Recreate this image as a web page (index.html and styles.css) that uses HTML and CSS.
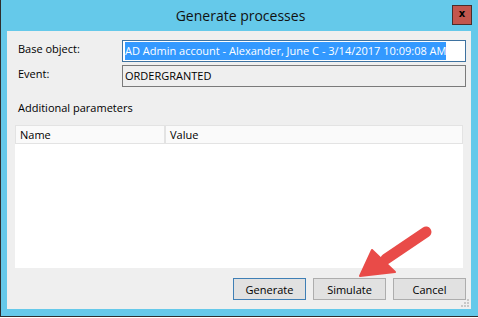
FILE: index.html
```html
<!DOCTYPE html>
<html lang="en">
<head>
    <meta charset="UTF-8">
    <title>Generate processes</title>
    <link rel="stylesheet" href="styles.css">
</head>
<body>
    <div class="window">
        <div class="titlebar">
            <span class="title">Generate processes</span>
            <span class="close">x</span>
        </div>

        <div class="panel">
            <!-- Object fields -->
            <div class="field">
                <label>Base object:</label>
                <div class="textbox focused"><span class="selected">AD Admin account - Alexander, June C - 3/14/2017 10:09:08 AM</span></div>
            </div>
            <div class="field">
                <label>Event:</label>
                <div class="textbox">ORDERGRANTED</div>
            </div>

            <p class="section">Additional parameters</p>

            <!-- Parameters grid -->
            <div class="grid">
                <div class="grid-head">
                    <div class="col col-name">Name</div>
                    <div class="col col-value">Value</div>
                </div>
                <div class="grid-body"></div>
            </div>

            <!-- Buttons -->
            <div class="buttons">
                <button class="default">Generate</button>
                <button>Simulate</button>
                <button>Cancel</button>
            </div>

            <svg class="grip" width="9" height="9" viewBox="0 0 9 9">
                <rect x="6" y="0" width="2" height="2" fill="#c8c8c8"/>
                <rect x="3" y="3" width="2" height="2" fill="#c8c8c8"/>
                <rect x="6" y="3" width="2" height="2" fill="#c8c8c8"/>
                <rect x="0" y="6" width="2" height="2" fill="#c8c8c8"/>
                <rect x="3" y="6" width="2" height="2" fill="#c8c8c8"/>
                <rect x="6" y="6" width="2" height="2" fill="#c8c8c8"/>
            </svg>
        </div>

        <!-- Callout arrow -->
        <svg class="arrow" width="478" height="318" viewBox="0 0 478 318">
            <g fill="#e94b48" stroke="#e94b48" stroke-linejoin="round">
                <line x1="426" y1="232" x2="386" y2="259" stroke-width="11" stroke-linecap="round"/>
                <polygon points="360,276 372,250 395,272" stroke-width="2"/>
            </g>
        </svg>
    </div>
</body>
</html>
```

FILE: styles.css
```css
body {
    margin: 0;
    font-family: "Open Sans", "Noto Sans", sans-serif;
    font-size: 11px;
    color: #000;
}
.window {
    position: relative;
    width: 477px;
    height: 316px;
    background-color: #65c9ea;
    border-left: 1px solid #2e2e2e;
    border-bottom: 1px solid #2e2e2e;
    display: flex;
    flex-direction: column;
}
.titlebar {
    height: 31px;
    display: flex;
    align-items: center;
    justify-content: center;
    position: relative;
}
.title {
    font-size: 14px;
    color: #111;
    margin-left: 2px;
}
.close {
    position: absolute;
    right: 6px;
    top: 5px;
    width: 18px;
    height: 18px;
    background-color: #c3564d;
    border: 1px solid #4b2d2b;
    font-size: 10px;
    font-weight: bold;
    line-height: 16px;
    text-align: center;
    font-family: "DejaVu Sans", sans-serif;
}
.panel {
    position: relative;
    margin-left: 6px;
    width: 464px;
    height: 278px;
    background-color: #efefef;
    padding: 9px 5px 0 8px;
    box-sizing: border-box;
}
.field {
    display: flex;
    align-items: flex-start;
    margin-bottom: 3px;
}
.field label {
    width: 104px;
    padding-left: 3px;
    padding-top: 1px;
}
.textbox {
    width: 344px;
    height: 22px;
    box-sizing: border-box;
    border: 1px solid #7a7a7a;
    padding: 1px 2px;
    line-height: 18px;
    white-space: nowrap;
    overflow: hidden;
}
.textbox.focused {
    border-color: #3e72a0;
    background-color: #fff;
}
.selected {
    background-color: #3399ff;
    color: #fff;
    display: inline-block;
}
.section {
    margin: 13px 0 0 3px;
    line-height: 15px;
}
.grid {
    margin-top: 10px;
    width: 448px;
}
.grid-head {
    display: flex;
    height: 19px;
    background-color: #fafafa;
    border: 1px solid #e3e3e3;
    box-sizing: border-box;
}
.col {
    padding-left: 4px;
    line-height: 17px;
}
.col-name {
    width: 144px;
    border-right: 2px solid #e3e3e3;
}
.grid-body {
    height: 124px;
    background-color: #fff;
}
.buttons {
    display: flex;
    justify-content: flex-end;
    gap: 7px;
    margin-top: 10px;
}
button {
    width: 73px;
    height: 22px;
    font-family: inherit;
    font-size: 11px;
    background-color: #e1e1e1;
    border: 1px solid #adadad;
    padding: 0;
    color: #000;
}
button.default {
    border-color: #3f7fb5;
}
.grip {
    position: absolute;
    right: 1px;
    bottom: 1px;
}
.arrow {
    position: absolute;
    left: -1px;
    top: 0;
    pointer-events: none;
}
```
